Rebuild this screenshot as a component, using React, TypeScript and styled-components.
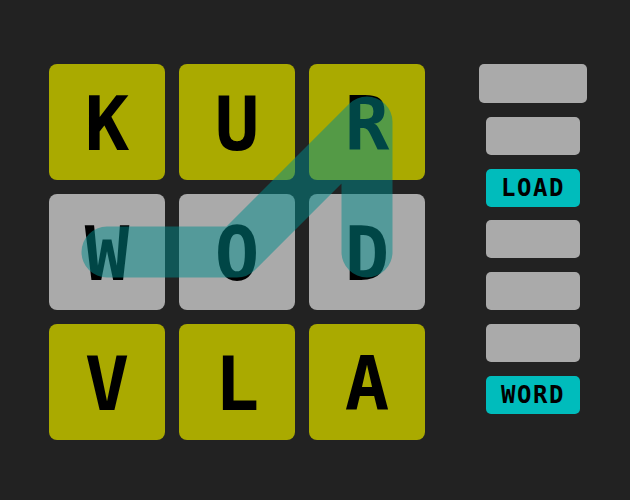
import React, {FC} from 'react';
import styled, {createGlobalStyle} from 'styled-components';

const TILE = 116;
const GAP = 14;

type TileKind = 'gold' | 'plain';

const BOARD: {letter: string; kind: TileKind}[] = [
  {letter: 'K', kind: 'gold'},
  {letter: 'U', kind: 'gold'},
  {letter: 'R', kind: 'gold'},
  {letter: 'W', kind: 'plain'},
  {letter: 'O', kind: 'plain'},
  {letter: 'D', kind: 'plain'},
  {letter: 'V', kind: 'gold'},
  {letter: 'L', kind: 'gold'},
  {letter: 'A', kind: 'gold'},
];

// traced word: W -> O -> R -> D, as [col, row]
const TRACE: [number, number][] = [[0, 1], [1, 1], [2, 0], [2, 1]];

const center = (i: number) => i * (TILE + GAP) + TILE / 2;

const SIDE_BUTTONS: {label?: string; wide?: boolean}[] = [
  {wide: true},
  {},
  {label: 'LOAD'},
  {},
  {},
  {},
  {label: 'WORD'},
];

const App: FC = () => {
  const boardSize = TILE * 3 + GAP * 2;
  const d = TRACE.map(([c, r], i) => `${i ? 'L' : 'M'}${center(c)},${center(r)}`).join(' ');

  return (
    <>
      <GlobalStyle />
      <Page>
        <Board>
          {BOARD.map(({letter, kind}, i) => (
            <Tile key={i} $kind={kind}>{letter}</Tile>
          ))}
          <Trace viewBox={`0 0 ${boardSize} ${boardSize}`} width={boardSize} height={boardSize}>
            <path d={d} fill="none" stroke="#008b8b" strokeWidth={51} strokeLinecap="round" strokeLinejoin="round" />
          </Trace>
        </Board>
        <Side>
          {SIDE_BUTTONS.map(({label, wide}, i) => (
            <SideButton key={i} $wide={wide} $active={!!label}>{label}</SideButton>
          ))}
        </Side>
      </Page>
    </>
  );
};

const GlobalStyle = createGlobalStyle`
  html, body {
    margin: 0;
    background: #222222;
  }
`;

const Page = styled.div`
  display: flex;
  align-items: flex-start;
  gap: 54px;
  padding: 64px 0 0 49px;
  font-family: "DejaVu Sans Mono", "Liberation Mono", monospace;
`;

const Board = styled.div`
  position: relative;
  display: grid;
  grid-template-columns: repeat(3, ${TILE}px);
  grid-auto-rows: ${TILE}px;
  gap: ${GAP}px;
`;

const Tile = styled.div<{$kind: TileKind}>`
  display: flex;
  align-items: center;
  justify-content: center;
  padding-top: 3px;
  box-sizing: border-box;
  border-radius: 8px;
  background: ${({$kind}) => ($kind === 'gold' ? '#aaaa00' : '#aaaaaa')};
  color: #000;
  font-size: 74px;
  font-weight: bold;
  line-height: 1;
`;

const Trace = styled.svg`
  position: absolute;
  inset: 0;
  opacity: 0.5;
  pointer-events: none;
`;

const Side = styled.div`
  display: flex;
  flex-direction: column;
  align-items: center;
  justify-content: space-between;
  width: 108px;
  height: 350px;
`;

const SideButton = styled.div<{$wide?: boolean; $active: boolean}>`
  display: flex;
  align-items: center;
  justify-content: center;
  width: ${({$wide}) => ($wide ? 108 : 94)}px;
  height: ${({$wide}) => ($wide ? 39 : 38)}px;
  border-radius: 5px;
  background: ${({$active}) => ($active ? '#00bcbc' : '#aaaaaa')};
  color: #000;
  font-size: 24px;
  font-weight: bold;
  letter-spacing: 1.5px;
  line-height: 1;
`;

export default App;
